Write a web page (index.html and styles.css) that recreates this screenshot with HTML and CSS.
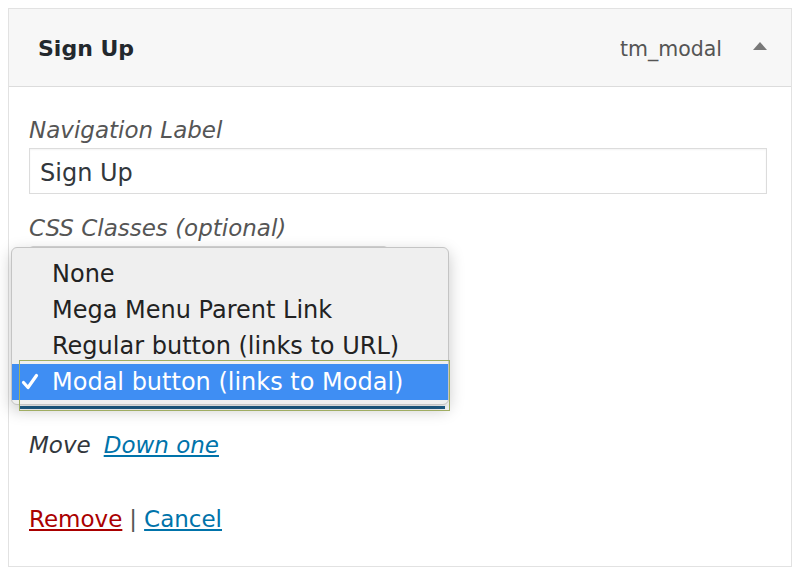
FILE: index.html
```html
<!DOCTYPE html>
<html>
<head>
<meta charset="utf-8">
<link rel="stylesheet" href="styles.css">
</head>
<body>
<div class="panel">
  <div class="head">
    <div class="title">Sign Up</div>
    <div class="type">tm_modal</div>
    <svg class="arrow" width="14" height="8" viewBox="0 0 14 8"><path d="M7 0 L14 8 L0 8 Z" fill="#787878"/></svg>
  </div>
  <div class="body">
    <label class="lbl first">Navigation Label</label>
    <input class="field" type="text" value="Sign Up">
    <label class="lbl second">CSS Classes (optional)</label>
    <div class="under">
      <div class="under-box"></div>
      <div class="popup">
        <ul class="opts">
          <li class="opt">None</li>
          <li class="opt">Mega Menu Parent Link</li>
          <li class="opt">Regular button (links to URL)</li>
          <li class="opt sel"><svg class="check" width="18" height="17" viewBox="0 0 18 17"><path d="M2.5 9.5 L7 14.5 L15.5 2.5" fill="none" stroke="#fff" stroke-width="3.2" stroke-linecap="round" stroke-linejoin="round"/></svg>Modal button (links to Modal)</li>
        </ul>
      </div>
      <div class="blue-line"></div>
      <div class="focus-rect"></div>
    </div>
    <div class="move"><span class="move-lbl">Move</span><a class="down" href="#">Down one</a></div>
    <div class="actions"><a class="remove" href="#">Remove</a><span class="sep">|</span><a class="cancel" href="#">Cancel</a></div>
  </div>
</div>
</body>
</html>
```
FILE: styles.css
```css
* { box-sizing: border-box; }
html, body { margin: 0; padding: 0; background: #ffffff; }
body { font-family: "DejaVu Sans", "Liberation Sans", sans-serif; color: #32373c; }
.panel {
  margin: 8px;
  width: 784px;
  height: 559px;
  border: 1px solid #e2e2e2;
  background: #fff;
}
.head {
  height: 78px;
  background: #f7f7f7;
  border-bottom: 1px solid #dcdcdc;
  display: flex;
  align-items: center;
  padding: 0 24px 0 29px;
}
.title {
  font-weight: bold;
  font-size: 22px;
  color: #23282d;
  flex: 1;
  padding-top: 2px;
}
.type {
  font-size: 20.5px;
  color: #555;
  margin-right: 31px;
  padding-top: 2px;
}
.arrow { display: block; margin-top: -4px; }
.body { padding: 0 24px 0 20px; }
.lbl {
  display: block;
  font-style: italic;
  font-size: 23px;
  line-height: 28px;
  color: #555;
}
.lbl.first { padding-top: 29px; }
.field {
  display: block;
  margin-top: 4px;
  width: 100%;
  height: 46px;
  border: 1px solid #dcdcdc;
  box-shadow: inset 0 1px 2px rgba(0,0,0,.05);
  padding: 4px 10px 0;
  font-family: inherit;
  font-size: 24px;
  color: #32373c;
  outline: none;
  background: #fff;
}
.lbl.second { margin-top: 20px; }
.under { position: relative; height: 185px; margin-top: 4px; }
.under-box {
  width: 359px;
  height: 40px;
  border: 1px solid #d6d6d6;
  border-radius: 4px;
}
.popup {
  position: absolute;
  left: -18px;
  top: 1px;
  width: 438px;
  height: 158px;
  background: #efefef;
  border: 1px solid #c4c4c4;
  border-radius: 6px;
  box-shadow: 0 5px 16px rgba(0,0,0,.22);
  padding-top: 8px;
  z-index: 2;
}
.opts { list-style: none; margin: 0; padding: 0; }
.opt {
  position: relative;
  height: 36px;
  line-height: 36px;
  font-size: 24px;
  padding-left: 40px;
  color: #222;
  white-space: nowrap;
}
.opt.sel { background: #3f8ef3; color: #fff; }
.check {
  position: absolute;
  left: 9px;
  top: 9px;
  display: block;
}
.blue-line {
  position: absolute;
  left: -9px;
  top: 160px;
  width: 425px;
  height: 3px;
  background: #1f5f8c;
  z-index: 1;
}
.focus-rect {
  position: absolute;
  left: -10px;
  top: 114px;
  width: 431px;
  height: 51px;
  border: 1px solid #a0ad62;
  z-index: 3;
}
.move {
  font-size: 23px;
  line-height: 28px;
  font-style: italic;
}
.move-lbl { color: #32373c; }
.down { color: #0073aa; margin-left: 13px; text-decoration: underline; }
.actions {
  margin-top: 46px;
  font-size: 23px;
  line-height: 28px;
}
.remove { color: #a00; text-decoration: underline; }
.sep { color: #555; margin: 0 7px; }
.cancel { color: #0073aa; text-decoration: underline; }
```
